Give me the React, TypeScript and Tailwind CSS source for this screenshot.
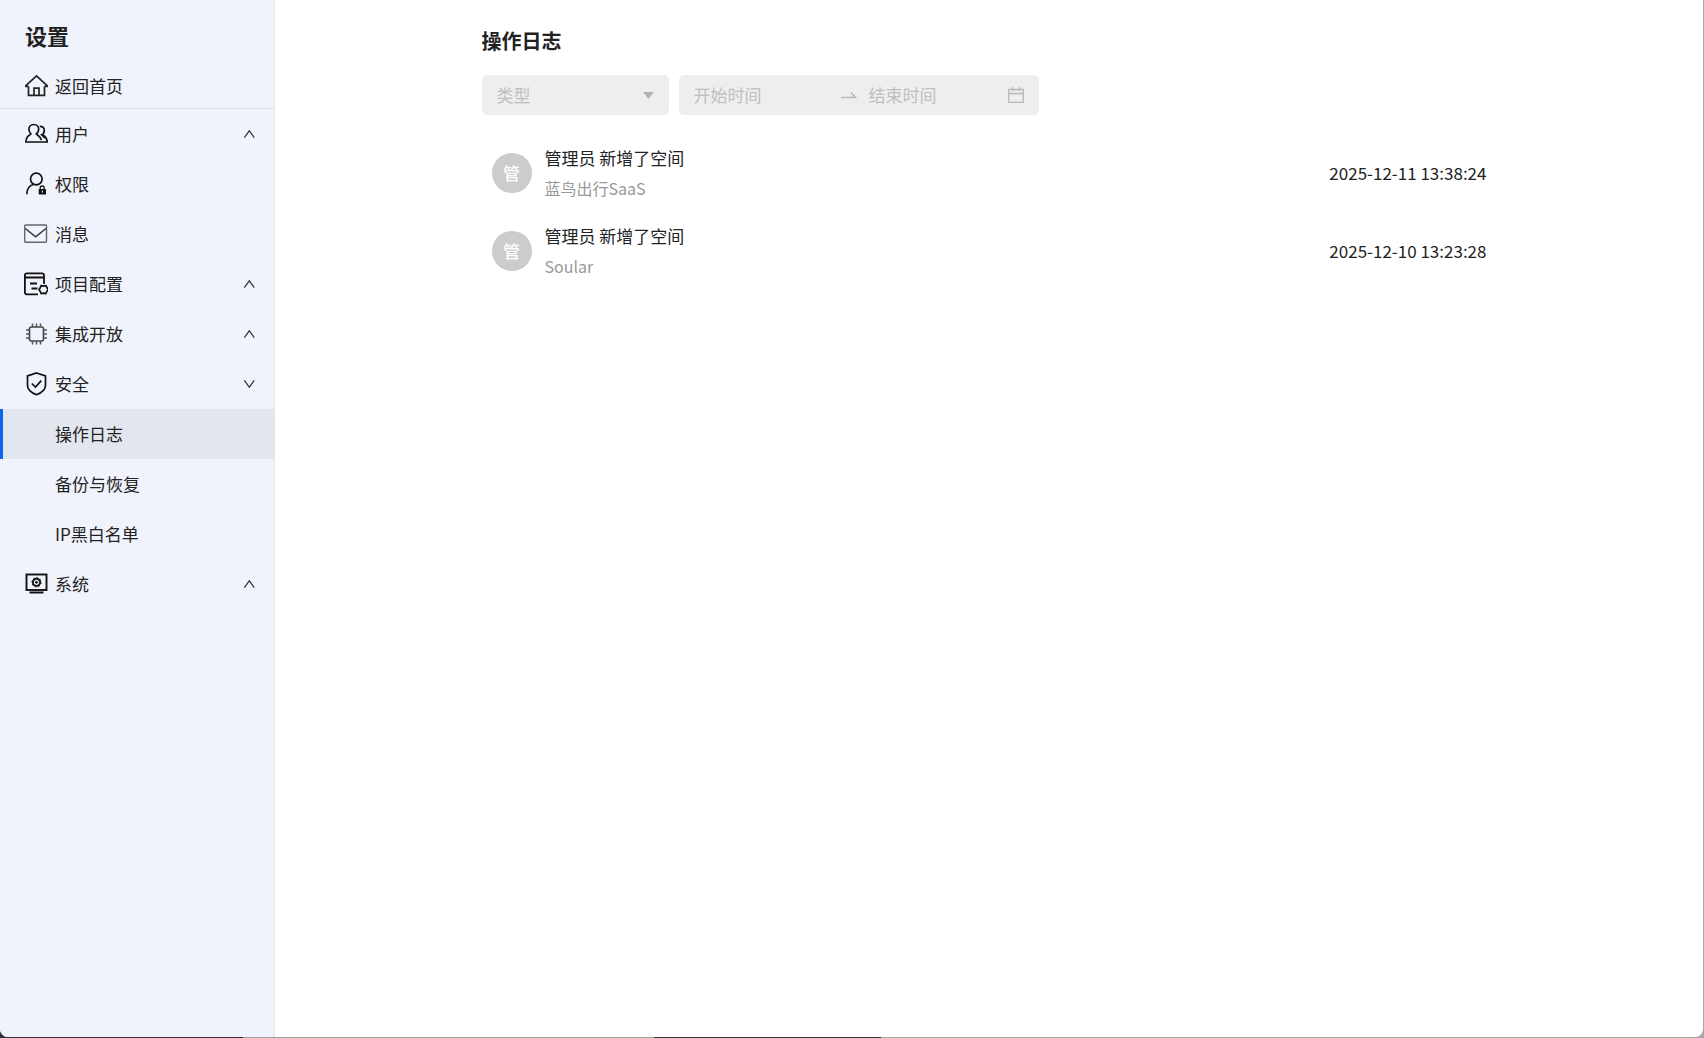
import React, { useState } from "react";
import clsx from "clsx";

type IconProps = {
  children: React.ReactNode;
};

const Icon: React.FC<IconProps> = ({ children }) => (
  <svg
    className="size-6 shrink-0 text-[#111111]"
    viewBox="0 0 24 24"
    fill="none"
    stroke="currentColor"
    strokeWidth="1.7"
    aria-hidden="true"
  >
    {children}
  </svg>
);

const HomeIcon = () => (
  <Icon>
    <path d="M4.5 12.5v8.8h16v-8.8" stroke="#222" />
    <path d="M4.5 12.4H1.9v-.9L12.5 1.8l10.6 9.700v.9h-2.6" stroke="#222" />
    <path d="M10 21v-6.8h5V21" stroke="#222" />
  </Icon>
);

const UsersIcon = () => (
  <Icon>
    <path d="M7.300 12C3.800 13.400 2 16.200 1.900 20h21.300c-.2-3.500-1.900-5.900-4.700-7.300" />
    <path d="M7.300 12C5.600 10.800 4.900 9 4.900 7.300c0-2.800 2.100-4.800 4.900-4.800s4.900 2 4.900 4.800c0 1.700-.8 3.500-2.300 4.700 2.200 1.600 4.300 3.300 4.800 6.200" />
    <path d="M15.800 4.400c2.900-.1 4.500 1.500 4.500 4 0 1.900-.8 3.400-2.600 4.300 1.500 1 2.500 2 2.900 3.500" />
  </Icon>
);

const PermissionIcon = () => (
  <Icon>
    <circle cx="12.300" cy="7" r="5.800" />
    <path d="M2.800 22.200c0-4.800 2.500-8.500 7-9.900" />
    <path d="M16.200 17.500v-1.500c0-1.300.8-2 2-2s2 .7 2 2v1.500" strokeWidth="1.300" />
    <rect x="14.700" y="17" width="7.300" height="5.600" rx=".5" fill="currentColor" stroke="none" />
    <path d="M18.300 18.600v2" stroke="#fff" strokeWidth="1" />
  </Icon>
);

const MessageIcon = () => (
  <Icon>
    <rect x=".7" y="3" width="21.800" height="17.300" rx="1" stroke="#666" strokeWidth="1.400" />
    <path d="m1.300 6.500 10.300 8.300L22 6.500" stroke="#333" strokeWidth="1.400" />
  </Icon>
);

const ProjectIcon = () => (
  <Icon>
    <path
      d="M20 12V3.300c0-1.300-.8-2-2-2H2.900c-1.300 0-2 .7-2 2v17c0 1.300.7 2 2 2H14"
      strokeWidth="1.800"
    />
    <path d="M1 5.500h19M6 11.500h7M7.500 16.500h6" strokeWidth="1.800" />
    <path
      d="m17 13.600 2.500.6 2.500-.6 1 2.200 1.200 1.900-1.500 1.800-.9 2.200-2.300-.5-2.300.5-.9-2.200-1.300-1.800 1.200-1.900z"
      strokeWidth="1.700"
      strokeLinejoin="round"
    />
  </Icon>
);

const ChipIcon = () => (
  <Icon>
    <rect x="5.500" y="5" width="14" height="14" rx="2" stroke="#444" strokeWidth="1.600" />
    <path
      d="M8.500 5V1.500M12.500 5V1.500M16.500 5V1.500M8.500 22.500V19M12.500 22.500V19M16.500 22.500V19M5.500 8H2M5.500 12H2M5.500 16H2M23 8h-3.500M23 12h-3.500M23 16h-3.500"
      stroke="#555"
      strokeWidth="1.500"
    />
  </Icon>
);

const SecurityIcon = () => (
  <Icon>
    <path d="m12.500 1 9 2.900v9.500c0 4.300-4.500 7.500-9 9.300-4.500-1.800-9-5-9-9.300V3.900z" />
    <path d="m7.800 11.500 3.700 3.600 5.800-6.500" />
  </Icon>
);

const SystemIcon = () => (
  <Icon>
    <rect x="2.500" y="2.500" width="20" height="15.500" strokeWidth="1.900" />
    <path d="M5.500 20.500h14" strokeWidth="2" />
    <circle cx="12.500" cy="10.300" r="3.600" strokeWidth="1.900" />
    <circle cx="12.500" cy="10.300" r="4.600" strokeWidth="1" strokeDasharray="1.800 1.700" />
    <circle cx="12.500" cy="10.300" r="1.400" fill="currentColor" stroke="none" />
  </Icon>
);

type ChevronProps = {
  open: boolean;
};

const Chevron: React.FC<ChevronProps> = ({ open }) => (
  <svg
    className="ml-auto size-3.5"
    viewBox="0 0 14 14"
    fill="none"
    stroke="#333"
    strokeWidth="1.200"
    aria-hidden="true"
  >
    <path d={open ? "m2.300 3.300 5 6.900 5-6.900" : "m2.300 10.700 5-6.900 5 6.900"} />
  </svg>
);

type MenuItem = {
  label: string;
  icon: React.FC;
  group?: boolean;
  children?: string[];
};

const menu: MenuItem[] = [
  { label: "用户", icon: UsersIcon, group: true },
  { label: "权限", icon: PermissionIcon },
  { label: "消息", icon: MessageIcon },
  { label: "项目配置", icon: ProjectIcon, group: true },
  { label: "集成开放", icon: ChipIcon, group: true },
  {
    label: "安全",
    icon: SecurityIcon,
    group: true,
    children: ["操作日志", "备份与恢复", "IP黑白名单"],
  },
  { label: "系统", icon: SystemIcon, group: true },
];

const logs = [
  { user: "管理员", action: "新增了空间", target: "蓝鸟出行SaaS", time: "2025-12-11 13:38:24" },
  { user: "管理员", action: "新增了空间", target: "Soular", time: "2025-12-10 13:23:28" },
];

const Sidebar = () => {
  const [opened, setOpened] = useState("安全");
  const [active, setActive] = useState("操作日志");

  return (
    <aside className="w-[275px] shrink-0 border-r border-[#e4e6ea] bg-[#f0f3fb]">
      <h1 className="px-[25px] pt-[19px] text-[22px] leading-8 font-bold">设置</h1>
      <a
        href="#home"
        className="mt-3 flex h-[46px] items-center gap-[7px] border-b border-[#dfe1e6] pl-6"
      >
        <HomeIcon />
        返回首页
      </a>
      <nav>
        {menu.map(({ label, icon: ItemIcon, group, children }) => (
          <div key={label}>
            {group ? (
              <button
                type="button"
                aria-expanded={opened === label}
                onClick={() => setOpened(opened === label ? "" : label)}
                className="flex h-[50px] w-full items-center gap-[7px] pr-[18px] pl-6"
              >
                <ItemIcon />
                {label}
                <Chevron open={opened === label} />
              </button>
            ) : (
              <a href="#settings" className="flex h-[50px] items-center gap-[7px] pl-6">
                <ItemIcon />
                {label}
              </a>
            )}
            {opened === label &&
              children?.map((child) => (
                <a
                  key={child}
                  href="#settings"
                  onClick={() => setActive(child)}
                  className={clsx(
                    "flex h-[50px] items-center border-l-3 pl-[52px]",
                    active === child
                      ? "border-[#0b66e8] bg-[#e2e6ef]"
                      : "border-transparent"
                  )}
                >
                  {child}
                </a>
              ))}
          </div>
        ))}
      </nav>
    </aside>
  );
};

const Filters = () => (
  <form className="mt-[18px] flex gap-2.5">
    <div className="relative w-[187px]">
      <select
        aria-label="类型"
        className="h-10 w-full appearance-none rounded-[5px] bg-[#eeeeee] px-[15px] text-[#bfbfbf]"
      >
        <option>类型</option>
      </select>
      <svg
        className="pointer-events-none absolute top-[17px] right-[15px] h-[7px] w-[11px]"
        viewBox="0 0 11 7"
        fill="#b3b3b3"
        aria-hidden="true"
      >
        <path d="M0 0h11L5.500 7z" />
      </svg>
    </div>
    <div className="flex h-10 w-[360px] items-center rounded-[5px] bg-[#eeeeee] px-[15px]">
      <input
        aria-label="开始时间"
        placeholder="开始时间"
        className="w-[147px] bg-transparent outline-none placeholder:text-[#bfbfbf]"
      />
      <svg
        className="mr-3 h-4 w-4 shrink-0"
        viewBox="0 0 16 16"
        fill="none"
        stroke="#b8b8b8"
        strokeWidth="1.500"
        aria-hidden="true"
      >
        <path d="M0 10.500h14.500l-4.500-5" />
      </svg>
      <input
        aria-label="结束时间"
        placeholder="结束时间"
        className="min-w-0 flex-1 bg-transparent outline-none placeholder:text-[#bfbfbf]"
      />
      <svg
        className="h-4 w-4 shrink-0"
        viewBox="0 0 16 16"
        fill="none"
        stroke="#b8b8b8"
        strokeWidth="1.300"
        aria-hidden="true"
      >
        <path d="M.7 2.500h14.600v12.800H.7zM.7 6.500h14.600M4.700 0v4M11.300 0v4" />
      </svg>
    </div>
  </form>
);

const App: React.FC = () => {
  return (
    <div className="min-h-screen bg-[linear-gradient(90deg,#33303a_0_243px,#a0a0a0_243px_654px,#33303a_654px_881px,#a8a8a8_881px)] pr-px pb-px font-['Noto_Sans_CJK_SC','Noto_Sans',sans-serif] text-[17px] text-[#222222]">
      <div className="flex min-h-[calc(100vh-1px)] overflow-hidden rounded-b-lg bg-white">
        <Sidebar />
        <main className="flex-1 px-6">
          <div className="mx-auto max-w-[1015px] pt-[25px]">
            <h2 className="text-xl leading-8 font-bold">操作日志</h2>
            <Filters />
            <ul className="mt-[19px]">
              {logs.map((log) => (
                <li key={log.time} className="flex items-center px-2.5 py-2">
                  <div className="flex size-10 items-center justify-center rounded-full bg-[#cccccc] font-medium text-white">
                    管
                  </div>
                  <div className="ml-[13px] leading-[31px]">
                    <p>
                      {log.user} {log.action}
                    </p>
                    <p className="text-base leading-[31px] text-[#999999]">{log.target}</p>
                  </div>
                  <time className="ml-auto">{log.time}</time>
                </li>
              ))}
            </ul>
          </div>
        </main>
      </div>
    </div>
  );
};

export default App;
